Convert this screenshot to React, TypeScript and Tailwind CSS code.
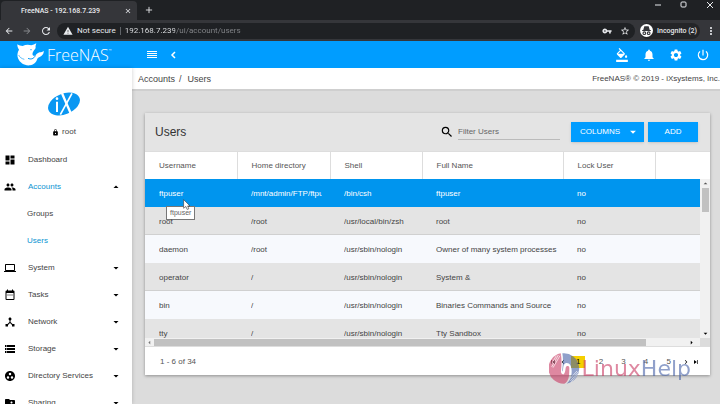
import React from "react";
import {
  MdArrowBack,
  MdArrowForward,
  MdArrowDropDown,
  MdArrowDropUp,
  MdChevronLeft,
  MdChevronRight,
  MdClose,
  MdDashboard,
  MdDeviceHub,
  MdFolderShared,
  MdFormatColorFill,
  MdGroup,
  MdGroupWork,
  MdLaptop,
  MdLock,
  MdMenu,
  MdMoreVert,
  MdNotifications,
  MdPowerSettingsNew,
  MdRefresh,
  MdSearch,
  MdSettings,
  MdSkipNext,
  MdSkipPrevious,
  MdStarBorder,
  MdStorage,
  MdVpnKey,
  MdWarning,
} from "react-icons/md";
import type { IconType } from "react-icons";

type NavItem = { label: string; icon?: IconType; arrow?: "up" | "down"; active?: boolean };

const nav: NavItem[] = [
  { label: "Dashboard", icon: MdDashboard },
  { label: "Accounts", icon: MdGroup, arrow: "up", active: true },
  { label: "Groups" },
  { label: "Users", active: true },
  { label: "System", icon: MdLaptop, arrow: "down" },
  { label: "Tasks", icon: TasksIcon as IconType, arrow: "down" },
  { label: "Network", icon: MdDeviceHub, arrow: "down" },
  { label: "Storage", icon: MdStorage, arrow: "down" },
  { label: "Directory Services", icon: MdGroupWork, arrow: "down" },
  { label: "Sharing", icon: MdFolderShared, arrow: "down" },
];

const users = [
  ["ftpuser", "/mnt/admin/FTP/ftpuser", "/bin/csh", "ftpuser", "no"],
  ["root", "/root", "/usr/local/bin/zsh", "root", "no"],
  ["daemon", "/root", "/usr/sbin/nologin", "Owner of many system processes", "no"],
  ["operator", "/", "/usr/sbin/nologin", "System &", "no"],
  ["bin", "/", "/usr/sbin/nologin", "Binaries Commands and Source", "no"],
  ["tty", "/", "/usr/sbin/nologin", "Tty Sandbox", "no"],
];

function TasksIcon({ className }: { className?: string }) {
  return (
    <svg viewBox="0 0 24 24" fill="currentColor" className={className} aria-hidden="true">
      <path d="M19 3h-1V1h-2v2H8V1H6v2H5a2 2 0 0 0-2 2v15a2 2 0 0 0 2 2h14a2 2 0 0 0 2-2V5a2 2 0 0 0-2-2zm0 17H5V8h14v12z" />
      <path d="M7 11h2v2H7zM11 11h2v2h-2zM15 11h2v2h-2z" />
    </svg>
  );
}

function SharkLogo() {
  return (
    <svg viewBox="0 0 84 72" className="h-6 w-7" aria-hidden="true">
      <path
        fill="#fff"
        d="M4 4c5 3 10 5 16 5 8-4 17-5 26-2 5-1 10-3 15-6-2 6-3 10-2 14-3 5-7 9-9 14-2 6 1 11 8 9 3-5 8-9 13-10 5 0 9-2 12-5 1 5-1 11-7 16-5 4-9 4-12 8-2 9-10 18-22 20-16 2-30-7-36-21-3-9-2-18 3-26C5 15 4 10 4 4z"
      />
      <path fill="none" stroke="#0a9bf7" strokeWidth="3" d="M36 46c8 4 17 2 22-8" />
      <path fill="none" stroke="#0a9bf7" strokeWidth="2" d="M8 36c3 7 9 11 17 13" />
      <circle cx="45" cy="20" r="2" fill="#0a9bf7" />
    </svg>
  );
}

function IxLogo() {
  return (
    <svg viewBox="0 0 96 72" className="h-6 w-8" aria-label="iX" role="img">
      <ellipse cx="48" cy="36" rx="50" ry="31" transform="rotate(-22 48 36)" fill="#0a97f2" />
      <g fill="none" stroke="#fff">
        <path strokeWidth="6" d="M27 29v31" />
        <path strokeWidth="7" d="M42 4l27 62" />
        <path strokeWidth="5" d="M72 4L37 68" />
      </g>
      <circle cx="27" cy="20" r="4" fill="#fff" />
    </svg>
  );
}

function BrowserChrome() {
  return (
    <div className="shrink-0 bg-[#1f2124] font-[Roboto,'Noto_Sans',sans-serif] text-[8px] text-[#e8eaed]">
      <div className="flex h-5 items-start justify-between">
        <div className="flex h-5 items-center">
          <div className="mt-px ml-px flex h-[19px] w-[136px] items-center justify-between rounded-t bg-[#35363a] pr-[5px] pl-5">
            <span className="text-[7px] font-medium">FreeNAS - 192.168.7.239</span>
            <button aria-label="Close tab">
              <MdClose className="size-2" />
            </button>
          </div>
          <button aria-label="New tab" className="ml-2">
            <svg viewBox="0 0 9 9" className="size-2" stroke="currentColor" aria-hidden="true">
              <path d="M4.500 1v7M1 4.500h7" />
            </svg>
          </button>
        </div>
        <div className="flex h-[10px] items-center gap-[18px] pr-[6px]">
          <button aria-label="Minimize">
            <svg viewBox="0 0 8 8" className="size-2" stroke="currentColor" aria-hidden="true">
              <path d="M1 4h6" />
            </svg>
          </button>
          <button aria-label="Maximize">
            <svg viewBox="0 0 8 8" className="size-2" fill="none" stroke="currentColor" aria-hidden="true">
              <rect x="1" y="1" width="5" height="5" rx="1" />
            </svg>
          </button>
          <button aria-label="Close window">
            <svg viewBox="0 0 8 8" className="size-2" stroke="currentColor" aria-hidden="true">
              <path d="M1 1l6 6M7 1L1 7" />
            </svg>
          </button>
        </div>
      </div>
      <div className="flex h-[21px] items-center bg-[#35363a] pl-1">
        <div className="flex w-[53px] items-center gap-2">
          <button aria-label="Back">
            <MdArrowBack className="size-[10px]" />
          </button>
          <button aria-label="Forward" className="text-[#85878b]">
            <MdArrowForward className="size-[10px]" />
          </button>
          <button aria-label="Reload">
            <MdRefresh className="size-3" />
          </button>
        </div>
        <div className="flex h-4 grow items-center rounded-full bg-[#1f2124] pr-[5px] pl-[6px]">
          <MdWarning className="size-[10px]" />
          <span className="ml-1">Not secure</span>
          <span className="mx-1 h-2 w-px bg-[#5f6368]" />
          <input
            aria-label="Address"
            defaultValue="192.168.7.239/ui/account/users"
            className="h-3 min-w-0 grow bg-[linear-gradient(to_right,#e8eaed_50px,#85878b_50px)] bg-clip-text text-transparent outline-none"
          />
          <button aria-label="Passwords">
            <MdVpnKey className="size-[10px]" />
          </button>
          <button aria-label="Bookmark" className="ml-2">
            <MdStarBorder className="size-[10px]" />
          </button>
        </div>
        <button className="ml-[5px] flex h-4 items-center gap-1 rounded-full bg-[#242528] pr-[3px] text-[7px] font-medium">
          <svg viewBox="0 0 24 24" className="size-[13px]" aria-hidden="true">
            <circle cx="12" cy="12" r="12" fill="#fff" />
            <path fill="#35363a" d="M8 4h8l2 7H6zM4 11h16v2H4z" />
            <g fill="none" stroke="#35363a" strokeWidth="2">
              <circle cx="8" cy="17" r="2.500" />
              <circle cx="16" cy="17" r="2.500" />
            </g>
          </svg>
          Incognito (2)
        </button>
        <button aria-label="Browser menu" className="mr-[3px] ml-[5px]">
          <MdMoreVert className="size-3" />
        </button>
      </div>
    </div>
  );
}

function AppHeader() {
  return (
    <header className="flex h-[27px] shrink-0 items-center bg-[#009dff] text-white">
      <a href="#home" className="flex w-[132px] items-center gap-[3px] pl-4">
        <SharkLogo />
        <span className="flex items-start font-['Open_Sans','Noto_Sans',sans-serif] text-[16px] leading-5 font-light">
          FreeNAS<span className="text-[4px] leading-3">™</span>
        </span>
      </a>
      <div className="flex grow items-center justify-between pr-[10px] pl-[14px]">
        <div className="flex items-center gap-3">
          <button aria-label="Menu">
            <svg viewBox="0 0 12 12" className="size-3" fill="currentColor" aria-hidden="true">
              <path d="M1 2h10v1H1zM1 4h10v1H1zM1 6h10v1H1zM1 8h10v1H1z" />
            </svg>
          </button>
          <button aria-label="Collapse">
            <svg
              viewBox="0 0 8 8"
              className="size-2"
              fill="none"
              stroke="currentColor"
              strokeWidth="1.500"
              aria-hidden="true"
            >
              <path d="M5 1L2 4l3 3" />
            </svg>
          </button>
        </div>
        <div className="flex items-center gap-[13px]">
          <button aria-label="Theme">
            <MdFormatColorFill className="size-[14px]" />
          </button>
          <button aria-label="Notifications">
            <MdNotifications className="size-[14px]" />
          </button>
          <button aria-label="Settings">
            <MdSettings className="size-[14px]" />
          </button>
          <button aria-label="Power">
            <MdPowerSettingsNew className="size-[14px]" />
          </button>
        </div>
      </div>
    </header>
  );
}

function Sidebar() {
  return (
    <aside className="z-10 flex w-[132px] shrink-0 flex-col bg-white shadow-[0_0_4px_rgba(0,0,0,0.2)]">
      <div className="flex h-[78px] shrink-0 flex-col items-center pt-6 pr-1">
        <IxLogo />
        <span className="mt-[10px] flex items-center gap-[3px] text-[#444]">
          <MdLock className="size-[7px] text-black" />
          root
        </span>
      </div>
      <nav>
        {nav.map(({ label, icon: Icon, arrow, active }) => (
          <a key={label} href={"#" + label} className="flex h-[27px] items-center pr-[10px] pl-1">
            {Icon ? <Icon className="mr-3 size-3 text-black" /> : <span className="w-[23px]" />}
            <span className={active ? "text-[#0a94d2]" : "text-[#444]"}>{label}</span>
            <span className="grow" />
            {arrow === "up" && <MdArrowDropUp className="size-3 text-black" />}
            {arrow === "down" && <MdArrowDropDown className="size-3 text-black" />}
          </a>
        ))}
      </nav>
    </aside>
  );
}

function Pointer() {
  return (
    <div className="pointer-events-none absolute top-[27px] left-[21px]">
      <div className="border border-[#777] bg-white px-[3px] text-[7px] leading-3 text-[#666]">ftpuser</div>
      <svg viewBox="0 0 12 19" className="absolute -top-[7px] left-[17px] h-[11px] w-[7px]" aria-hidden="true">
        <path fill="#fff" stroke="#333" d="M1 1v15l4-3 2 5 3-1-2-5h4z" />
      </svg>
    </div>
  );
}

function UsersTable() {
  return (
    <div className="relative h-[187px] overflow-hidden border-t border-[#ddd] bg-[#e4e4e4]">
      <table className="w-full table-fixed border-collapse text-left">
        <colgroup>
          <col className="w-[92px]" />
          <col className="w-[93px]" />
          <col className="w-[92px]" />
          <col className="w-[141px]" />
          <col className="w-[92px]" />
          <col />
        </colgroup>
        <thead>
          <tr className="h-[27px] bg-white text-[#555]">
            {["Username", "Home directory", "Shell", "Full Name", "Lock User"].map((h) => (
              <th key={h} className="border-r border-[#ddd] p-0 pl-[14px] font-normal">
                {h}
              </th>
            ))}
            <td />
          </tr>
        </thead>
        <tbody>
          {users.map((row, i) => (
            <tr
              key={row[0]}
              className={
                i === 0
                  ? "h-7 bg-[#0095ee] text-white"
                  : i % 2 === 1
                    ? "h-7 bg-[#e4e4e4] text-[#444] shadow-[inset_0_-1px_#d0d0d0]"
                    : "h-7 bg-[#f7f9fd] text-[#444]"
              }
            >
              {row.map((cell, j) => (
                <td key={j} className={j === 1 ? "p-0 pt-[2px] pr-2 pl-[14px]" : "relative p-0 pt-[2px] pl-[14px]"}>
                  <div className="overflow-hidden whitespace-nowrap">{cell}</div>
                  {i === 0 && j === 0 && <Pointer />}
                </td>
              ))}
              <td />
            </tr>
          ))}
        </tbody>
      </table>
      <div className="absolute top-[27px] right-0 bottom-0 flex w-[10px] flex-col items-center justify-between bg-[#f1f1f1]">
        <div className="flex flex-col items-center">
          <MdArrowDropUp className="size-[9px] text-[#555]" />
          <div className="h-6 w-[7px] bg-[#c1c1c1]" />
        </div>
        <MdArrowDropDown className="size-[9px]" />
      </div>
    </div>
  );
}

function Watermark() {
  return (
    <div className="pointer-events-none absolute right-[29px] bottom-5 flex items-center gap-[2px] opacity-60">
      <svg viewBox="0 0 93 93" className="size-[31px]" aria-hidden="true">
        <path
          fill="#c93a63"
          d="M35 1A46 46 0 0 0 46 92c6-3 13-12 14-24 1-9 1-15 1-23 0-8-10-8-11 0-1 9-3 21-9 19-7-2-5-12-4-22 1-13 1-29-2-41z"
        />
        <path
          fill="#4762a8"
          d="M40 1a46 46 0 0 1 13 91c10-9 15-20 15-38 0-14-6-25-16-24-8 1-9 10-10 22-1 6-3 3-2-4 2-17 3-32 0-47z"
        />
        <g stroke="#fff" strokeWidth="2">
          <path d="M22 8L8 32M28 6L8 42M33 8L12 44M86 64L66 88M88 56L64 84M84 54L64 76" />
        </g>
      </svg>
      <span className="font-['DejaVu_Sans',sans-serif] text-[22px] leading-6">
        <span className="text-[#c93a63]">Linux</span>
        <span className="text-[#4762a8]">Help</span>
      </span>
    </div>
  );
}

function UsersCard() {
  return (
    <section className="bg-white shadow-[0_1px_3px_rgba(0,0,0,0.35)]">
      <div className="flex h-[38px] items-center bg-[#e4e4e4] pr-3 pl-[10px]">
        <h1 className="grow text-[12px] text-[#333]">Users</h1>
        <label htmlFor="filter" aria-label="Filter Users">
          <MdSearch className="size-[14px] text-black" />
        </label>
        <input
          id="filter"
          placeholder="Filter Users"
          className="ml-1 h-4 w-[102px] border-b border-[#bbb] bg-transparent outline-none placeholder:text-[#666]"
        />
        <button className="ml-[11px] flex h-5 w-[73px] items-center justify-between bg-[#009dff] pr-1 pl-[9px] font-medium text-white shadow-sm">
          COLUMNS
          <MdArrowDropDown className="size-[14px]" />
        </button>
        <button className="ml-1 h-5 w-[50px] bg-[#009dff] font-medium text-white shadow-sm">ADD</button>
      </div>
      <UsersTable />
      <div className="flex h-2 items-center bg-[#f1f1f1]">
        <MdArrowDropDown className="size-[9px] rotate-90 text-[#777]" />
        <div className="h-[7px] w-[492px] bg-[#c1c1c1]" />
        <div className="grow" />
        <MdArrowDropDown className="size-[9px] -rotate-90" />
        <div className="ml-1 h-full w-[10px] bg-[#dcdcdc]" />
      </div>
      <div className="flex h-[29px] items-center border-t border-[#ddd] pt-[2px] pr-[10px] pl-[15px] text-[#555]">
        <span className="grow">1 - 6 of 34</span>
        <button aria-label="First page">
          <MdSkipPrevious className="size-2 text-black" />
        </button>
        <button aria-label="Previous page" className="ml-[2px]">
          <MdChevronLeft className="size-2 text-black" />
        </button>
        <div className="grid w-[113px] grid-cols-5 justify-items-center">
          {[1, 2, 3, 4, 5].map((n) => (
            <button key={n} className={n === 1 ? "h-3 w-[14px] bg-[#f5cf00] text-black" : "h-3 w-[14px]"}>
              {n}
            </button>
          ))}
        </div>
        <button aria-label="Next page" className="ml-[2px]">
          <MdChevronRight className="size-2 text-black" />
        </button>
        <button aria-label="Last page" className="ml-[2px]">
          <MdSkipNext className="size-2 text-black" />
        </button>
      </div>
    </section>
  );
}

export default function App() {
  return (
    <div className="relative flex h-screen flex-col overflow-hidden bg-[#dcdcdc] font-['Liberation_Sans',Arial,sans-serif] text-[8px] leading-3">
      <BrowserChrome />
      <AppHeader />
      <div className="flex min-h-0 grow">
        <Sidebar />
        <main className="flex min-w-0 grow flex-col">
          <div className="flex h-[23px] shrink-0 items-center justify-between overflow-hidden border-b-2 border-[#cfcfcf] bg-white pl-[6px] whitespace-nowrap text-[#444]">
            <div className="flex gap-1 text-[9px]">
              <a href="#accounts">Accounts</a>
              <span>/</span>
              <a href="#users" className="ml-[2px]">
                Users
              </a>
            </div>
            <span>FreeNAS® © 2019 - iXsystems, Inc.</span>
          </div>
          <div className="pt-[22px] pr-[10px] pl-[13px]">
            <UsersCard />
          </div>
        </main>
      </div>
      <Watermark />
    </div>
  );
}
